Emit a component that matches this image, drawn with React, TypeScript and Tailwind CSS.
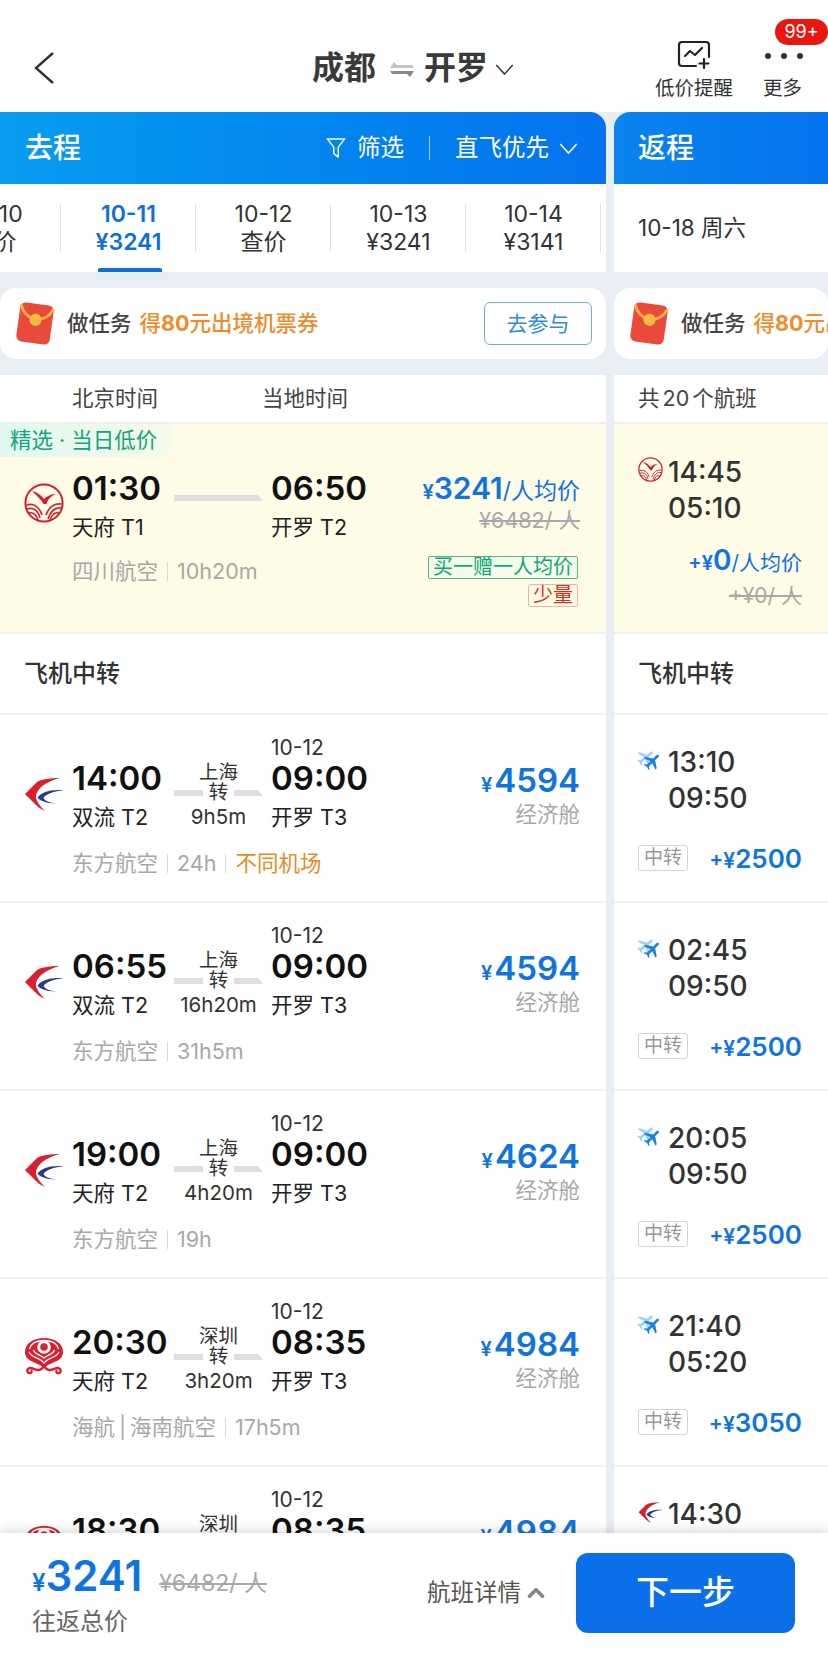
import { ChevronUp } from 'lucide-react';

type Airline = 'sichuan' | 'eastern' | 'hainan' | 'juneyao';

function SichuanLogo({ className }: { className: string }) {
    return (
        <svg viewBox="0 0 40 40" className={className}>
            <circle cx="20" cy="20" r="18.6" fill="none" stroke="#d3202e" strokeWidth="2" />
            <path d="M8 8C13 9 17 12 20 16C23 13 27 11 32 11C27 13 24 16 22.5 21L19.5 21C17 16 12 12 8 8Z" fill="#d3202e" />
            <g fill="none" stroke="#d3202e" strokeWidth="1.6">
                <path d="M2.5 22C9 20 15 23 18 32" />
                <path d="M3 26C9 24 14 27 16 35" />
                <path d="M5 30C9 29 12 31 14 37" />
                <path d="M37.5 21C30 20 25 24 22 32" />
                <path d="M37 25C31 24 27 27 24 36" />
                <path d="M35 30C31 29 28 31 26 37" />
            </g>
        </svg>
    );
}

function EasternLogo({ className }: { className: string }) {
    return (
        <svg viewBox="0 0 40 40" className={className}>
            <path d="M36 5C26 5 18 6 13 9L1 21L10 30C13 33 16 36 21 38C16 33 12 28 12 24C12 15 24 8 36 5Z" fill="#d8202f" />
            <path d="M39.5 17.5C28 16 17 19 13.5 25C18 29 25 31 32 30C26 30 21 28 19.5 25C22 21 30 18 39.5 17.5Z" fill="#2b3a8c" />
        </svg>
    );
}

function HainanLogo({ className }: { className: string }) {
    return (
        <svg viewBox="0 0 40 40" className={className}>
            <path d="M20 31C12 24 1 25 1 15C1 6 10 1 20 1C30 1 39 6 39 15C39 25 28 24 20 31Z" fill="#dc1e2d" />
            <circle cx="20" cy="10" r="6.8" fill="#fff" />
            <circle cx="20" cy="10" r="3.8" fill="#dc1e2d" />
            <g fill="none" stroke="#fff" strokeWidth="1.3">
                <path d="M5 15C8 21 15 20 20 26C25 20 32 21 35 15" />
                <path d="M9.5 13C11 18 16 17 20 21C24 17 29 18 30.5 13" />
                <path d="M5.5 12C7 6 13 3.5 20 3.5C27 3.5 33 6 34.5 12" />
            </g>
            <g fill="none" stroke="#dc1e2d" strokeWidth="2.4" strokeLinecap="round">
                <path d="M20 29C16 36 11 32 7 31C3 31 2 35 5 36C7 36.5 8 35 7.5 34" />
                <path d="M20 29C24 36 29 32 33 31C37 31 38 35 35 36C33 36.5 32 35 32.5 34" />
            </g>
        </svg>
    );
}

function JuneyaoLogo({ className }: { className: string }) {
    const plane = 'M22 12C22 11 21 10.5 20 10.5H15L10 3H8L10.5 10.5H5.5L3.5 8H2L3.5 12L2 16H3.5L5.5 13.5H10.5L8 21H10L15 13.5H20C21 13.5 22 13 22 12Z';
    return (
        <svg viewBox="0 0 28 28" className={className}>
            <g transform="rotate(-38 10 12) translate(-3 -1)" fill="#9fd4f7">
                <path d={plane} />
            </g>
            <g transform="rotate(-45 16 16) translate(4 4)" fill="#1a82e2">
                <path d={plane} />
            </g>
        </svg>
    );
}

function AirlineLogo({ airline, className }: { airline: Airline; className: string }) {
    if (airline === 'sichuan') return <SichuanLogo className={className} />;
    if (airline === 'eastern') return <EasternLogo className={className} />;
    if (airline === 'hainan') return <HainanLogo className={className} />;
    return <JuneyaoLogo className={className} />;
}

function RedPacket() {
    return (
        <svg viewBox="0 0 44 48" className="w-[42px] h-[45px] shrink-0">
            <g transform="rotate(8 22 24)">
                <rect x="4" y="3" width="36" height="42" rx="6" fill="#ea4a3c" />
                <path d="M4.5 6C8 15 14 19 22 19.5C30 19 36 15 39.5 6" fill="none" stroke="#f7b24c" strokeWidth="3" />
                <circle cx="22" cy="20" r="6.5" fill="#f4bb3e" />
            </g>
        </svg>
    );
}

function Caret({ className, color, width = 1.6 }: { className: string; color: string; width?: number }) {
    return (
        <svg viewBox="0 0 20 12" className={className} fill="none" stroke={color} strokeWidth={width}>
            <path d="M1 1L10 11L19 1" />
        </svg>
    );
}

function Divider({ className }: { className: string }) {
    return <span className={`inline-block w-px bg-[#d9d9d9] ${className}`} />;
}

function BarLine() {
    return (
        <svg viewBox="0 0 89 9" className="w-[89px] h-[9px] block">
            <path d="M0 3H84L89 9H0Z" fill="#dfdfe2" />
        </svg>
    );
}

function BarLeft() {
    return <span className="block w-[29px] h-[6px] bg-[#dfdfe2]" />;
}

function BarRight() {
    return (
        <svg viewBox="0 0 29 9" className="w-[29px] h-[9px] block -mt-[3px]">
            <path d="M0 3H24L29 9H0Z" fill="#dfdfe2" />
        </svg>
    );
}

type Flight = {
    airline: Airline;
    dep: string;
    depPort: string;
    arr: string;
    arrPort: string;
    via: string;
    viaTime: string;
    meta: string[];
    warn?: string;
    price: string;
};

const flights: Flight[] = [
    { airline: 'eastern', dep: '14:00', depPort: '双流 T2', arr: '09:00', arrPort: '开罗 T3', via: '上海', viaTime: '9h5m', meta: ['东方航空', '24h'], warn: '不同机场', price: '4594' },
    { airline: 'eastern', dep: '06:55', depPort: '双流 T2', arr: '09:00', arrPort: '开罗 T3', via: '上海', viaTime: '16h20m', meta: ['东方航空', '31h5m'], price: '4594' },
    { airline: 'eastern', dep: '19:00', depPort: '天府 T2', arr: '09:00', arrPort: '开罗 T3', via: '上海', viaTime: '4h20m', meta: ['东方航空', '19h'], price: '4624' },
    { airline: 'hainan', dep: '20:30', depPort: '天府 T2', arr: '08:35', arrPort: '开罗 T3', via: '深圳', viaTime: '3h20m', meta: ['海航\u2009|\u2009海南航空', '17h5m'], price: '4984' },
    { airline: 'hainan', dep: '18:30', depPort: '天府 T2', arr: '08:35', arrPort: '开罗 T3', via: '深圳', viaTime: '3h20m', meta: ['海航\u2009|\u2009海南航空', '17h5m'], price: '4984' },
];

const returns: { airline: Airline; dep: string; arr: string; price: string }[] = [
    { airline: 'juneyao', dep: '13:10', arr: '09:50', price: '2500' },
    { airline: 'juneyao', dep: '02:45', arr: '09:50', price: '2500' },
    { airline: 'juneyao', dep: '20:05', arr: '09:50', price: '2500' },
    { airline: 'juneyao', dep: '21:40', arr: '05:20', price: '3050' },
    { airline: 'eastern', dep: '14:30', arr: '05:20', price: '3050' },
];

const dates = [
    { date: '10-10', price: '查价' },
    { date: '10-11', price: '¥3241', active: true },
    { date: '10-12', price: '查价' },
    { date: '10-13', price: '¥3241' },
    { date: '10-14', price: '¥3141' },
];

function Banner() {
    return (
        <div className="h-[71px] shrink-0 mt-[16px] mb-[16px] bg-white rounded-[16px] flex items-center pl-[14px] pr-[14px] whitespace-nowrap overflow-hidden">
            <RedPacket />
            <span className="ml-[11px] text-[21.5px] font-medium text-[#444]">做任务</span>
            <span className="ml-[8px] text-[21.5px] font-medium text-[#f08c2e]">
                得<span className="font-bold">80</span>元出境机票券
            </span>
            <span className="ml-auto shrink-0 w-[108px] h-[43px] flex items-center justify-center border border-[#6fb0dc] rounded-[6px] text-[21px] text-[#2c8fd6]">
                去参与
            </span>
        </div>
    );
}

function FlightRow({ flight }: { flight: Flight }) {
    return (
        <div className="h-[188px] shrink-0 bg-white border-b-2 border-[#f0f1f3] pt-[21px]">
            <div className="flex h-[95px]">
                <div className="w-[72px] pl-[24px] pt-[37px] shrink-0">
                    <AirlineLogo airline={flight.airline} className="w-[40px] h-[40px]" />
                </div>
                <div className="w-[102px] shrink-0 pt-[24px]">
                    <div className="h-[36px] leading-[36px] text-[33px] font-semibold text-[#111]">{flight.dep}</div>
                    <div className="h-[35px] leading-[42px] text-[21.5px] text-[#222]">{flight.depPort}</div>
                </div>
                <div className="w-[97px] shrink-0 pr-[8px] pt-[25px] text-[#333] text-center">
                    <div className="h-[22px] leading-[22px] text-[19.5px]">{flight.via}</div>
                    <div className="h-[20px] flex items-center justify-between">
                        <BarLeft />
                        <span className="text-[19.5px] leading-[20px] -mt-[2px]">转</span>
                        <BarRight />
                    </div>
                    <div className="h-[24px] mt-[2px] leading-[24px] text-[20.5px] whitespace-nowrap">{flight.viaTime}</div>
                </div>
                <div className="w-[120px] shrink-0">
                    <div className="h-[24px] leading-[24px] text-[21px] text-[#333]">10-12</div>
                    <div className="h-[36px] leading-[36px] text-[33px] font-semibold text-[#111]">{flight.arr}</div>
                    <div className="h-[35px] leading-[42px] text-[21.5px] text-[#222]">{flight.arrPort}</div>
                </div>
                <div className="flex-1 pr-[26px] pt-[23px] text-right">
                    <div className="h-[42px] leading-[42px] text-[#1074e0] font-semibold whitespace-nowrap">
                        <span className="text-[20px] mr-[2px]">¥</span>
                        <span className="text-[33px]">{flight.price}</span>
                    </div>
                    <div className="h-[28px] leading-[28px] -mt-[1px] text-[21.5px] text-[#a8a8a8]">经济舱</div>
                </div>
            </div>
            <div className="mt-[18px] pl-[72px] h-[28px] flex items-center gap-[9px] text-[21.5px] text-[#a8a8a8] whitespace-nowrap">
                {flight.meta.map((item, index) => (
                    <span key={item} className="flex items-center gap-[9px]">
                        {index > 0 && <Divider className="h-[19px]" />}
                        {item}
                    </span>
                ))}
                {flight.warn && (
                    <>
                        <Divider className="h-[19px]" />
                        <span className="text-[#ea8a1f]">{flight.warn}</span>
                    </>
                )}
            </div>
        </div>
    );
}

function ReturnRow({ item }: { item: (typeof returns)[number] }) {
    return (
        <div className="h-[188px] shrink-0 bg-white border-b-2 border-[#f0f1f3] pt-[29px] pl-[24px] pr-[26px]">
            <div className="h-[36px] flex items-center text-[28px] font-medium text-[#333] leading-[36px]">
                <span className="w-[30px] shrink-0 -mt-[6px]">
                    <AirlineLogo airline={item.airline} className="w-[25px] h-[25px]" />
                </span>
                {item.dep}
            </div>
            <div className="h-[36px] pl-[30px] text-[28px] font-medium text-[#333] leading-[36px]">{item.arr}</div>
            <div className="mt-[28px] h-[28px] flex items-center justify-between">
                <span className="w-[50px] h-[26px] flex items-center justify-center border border-[#d4d4d4] rounded-[3px] text-[19px] text-[#999]">
                    中转
                </span>
                <span className="text-[#1074e0] font-semibold whitespace-nowrap">
                    <span className="text-[21px]">+¥</span>
                    <span className="text-[26px]">{item.price}</span>
                </span>
            </div>
        </div>
    );
}

export default function App() {
    return (
        <div className="w-[828px] h-[1663px] flex flex-col overflow-hidden bg-white font-['Inter','Noto_Sans_CJK_SC',sans-serif]">
            {/* Top bar */}
            <header className="h-[112px] shrink-0 flex relative">
                <div className="w-[300px] pl-[33px] pt-[52px]">
                    <svg viewBox="0 0 21 32" className="w-[21px] h-[32px]" fill="none" stroke="#333" strokeWidth="2.4">
                        <path d="M20 1L3 16L20 31" />
                    </svg>
                </div>
                <div className="w-[340px] shrink-0 pl-[12px] pt-[46px] flex items-start">
                    <span className="text-[32px] leading-[44px] font-bold text-[#3a3a3a]">成都</span>
                    <svg viewBox="0 0 24 15" className="w-[24px] h-[15px] ml-[14px] mt-[16px]">
                        <path d="M0 6H24L22 3H7L4 0Z" fill="#c4c4c4" />
                        <path d="M24 9H0L2 12H17L20 15Z" fill="#8a8a8a" />
                    </svg>
                    <span className="ml-[10px] text-[32px] leading-[44px] font-bold text-[#3a3a3a]">开罗</span>
                    <Caret className="w-[19px] h-[11px] mt-[18px] ml-[7px]" color="#333" />
                </div>
                <div className="flex-1 flex text-[19.5px] text-[#333]">
                    <div className="w-[108px] pt-[40px] flex flex-col items-center shrink-0">
                        <svg viewBox="0 0 34 30" className="w-[34px] h-[30px]" fill="none" stroke="#222" strokeWidth="2.2" strokeLinecap="round" strokeLinejoin="round">
                            <path d="M19 26H5C3 26 2 25 2 23V5C2 3 3 2 5 2H29C31 2 32 3 32 5V17" />
                            <path d="M8 16L13 11L18 15L25 8" />
                            <path d="M27 19V28M22.5 23.5H31.5" />
                        </svg>
                        <span className="mt-[6px] leading-[24px] whitespace-nowrap">低价提醒</span>
                    </div>
                    <div className="flex-1 pt-[40px] pl-[15px] relative">
                        <span className="absolute right-0 top-[19px] w-[53px] h-[26px] rounded-full bg-[#e8170f] text-white text-[18px] leading-[26px] text-center">
                            99+
                        </span>
                        <div className="h-[30px] flex items-start pt-[13px] gap-[10px] pl-[2px]">
                            <span className="w-[6px] h-[6px] rounded-full bg-[#333]" />
                            <span className="w-[6px] h-[6px] rounded-full bg-[#333]" />
                            <span className="w-[6px] h-[6px] rounded-full bg-[#333]" />
                        </div>
                        <span className="block mt-[6px] leading-[24px] whitespace-nowrap">更多</span>
                    </div>
                </div>
            </header>

            <main className="flex-1 min-h-0 flex gap-[8px] bg-[#e9eef4] overflow-hidden">
                {/* Outbound */}
                <section className="w-[606px] shrink-0 flex flex-col">
                    <div className="h-[72px] shrink-0 rounded-tr-[16px] bg-gradient-to-r from-[#0a9cf0] to-[#0672ee] flex items-center pl-[25px] pr-[28px] text-white">
                        <span className="text-[28px] font-medium">去程</span>
                        <svg viewBox="0 0 22 24" className="w-[20px] h-[22px] ml-auto" fill="none" stroke="#fff" strokeWidth="1.6" strokeLinejoin="round">
                            <path d="M1.5 2H20.5L13.5 11V22L8.5 18V11Z" />
                        </svg>
                        <span className="ml-[11px] text-[23.5px]">筛选</span>
                        <span className="w-px h-[24px] bg-white/60 ml-[25px] mr-[25px]" />
                        <span className="text-[23.5px]">直飞优先</span>
                        <Caret className="w-[19px] h-[11px] ml-[10px]" color="#fff" />
                    </div>

                    {/* Date tabs */}
                    <div className="h-[88px] shrink-0 bg-white flex overflow-hidden">
                        <div className="flex shrink-0 -ml-[74px]">
                            {dates.map((d) => (
                                <div key={d.date} className="relative w-[135px] shrink-0 pt-[16px] text-center whitespace-nowrap">
                                    <div className={`text-[23px] leading-[28px] ${d.active ? 'text-[#0d6fde] font-semibold' : 'text-[#333]'}`}>{d.date}</div>
                                    <div className={`text-[23px] leading-[28px] ${d.active ? 'text-[#0d6fde] font-semibold' : 'text-[#333]'}`}>{d.price}</div>
                                    <span className="absolute right-0 top-[20px] w-px h-[48px] bg-[#e2e2e2]" />
                                    {d.active && <span className="absolute left-[37px] bottom-0 w-[64px] h-[4px] bg-[#0d6fde] rounded-t-[2px]" />}
                                </div>
                            ))}
                        </div>
                    </div>

                    <Banner />

                    <div className="h-[49px] shrink-0 bg-white border-b-2 border-[#f0efe8] flex items-center text-[21.5px] text-[#444]">
                        <span className="ml-[72px] w-[190px]">北京时间</span>
                        <span>当地时间</span>
                    </div>

                    {/* Selected flight */}
                    <div className="relative h-[208px] shrink-0 bg-[#fefbe7] pt-[22px]">
                        <span className="absolute left-0 top-0 w-[172px] h-[33px] pl-[10px] rounded-br-[14px] bg-gradient-to-r from-[#e3f7ee] to-[#f3faea] text-[21.5px] leading-[32px] text-[#12a57c] whitespace-nowrap">
                            精选 · 当日低价
                        </span>
                        <div className="flex h-[95px]">
                            <div className="w-[72px] pl-[24px] pt-[37px] shrink-0">
                                <SichuanLogo className="w-[40px] h-[40px]" />
                            </div>
                            <div className="w-[102px] shrink-0 pt-[24px]">
                                <div className="h-[36px] leading-[36px] text-[33px] font-semibold text-[#111]">01:30</div>
                                <div className="h-[35px] leading-[42px] text-[21.5px] text-[#222]">天府 T1</div>
                            </div>
                            <div className="w-[97px] shrink-0 pt-[46px]">
                                <BarLine />
                            </div>
                            <div className="w-[120px] shrink-0 pt-[24px]">
                                <div className="h-[36px] leading-[36px] text-[33px] font-semibold text-[#111]">06:50</div>
                                <div className="h-[35px] leading-[42px] text-[21.5px] text-[#222]">开罗 T2</div>
                            </div>
                            <div className="flex-1 pr-[26px] pt-[22px] text-right whitespace-nowrap">
                                <div className="h-[40px] leading-[40px] text-[#1074e0]">
                                    <span className="text-[20px] font-semibold">¥</span>
                                    <span className="text-[30px] font-semibold">3241</span>
                                    <span className="text-[23px]">/人均价</span>
                                </div>
                                <div className="h-[30px] leading-[30px] -mt-[3px] text-[21.5px] text-[#a8a8a8] line-through">¥6482/ 人</div>
                            </div>
                        </div>
                        <div className="flex -mt-[1px]">
                            <div className="mt-[17px] pl-[72px] h-[28px] flex items-center gap-[9px] text-[21.5px] text-[#a8a8a8] whitespace-nowrap">
                                四川航空
                                <Divider className="h-[19px]" />
                                10h20m
                            </div>
                            <div className="ml-auto pr-[28px] pt-[16px] flex flex-col items-end gap-[5px]">
                                <span className="h-[23px] px-[4px] border border-[#4dbc8d] rounded-[2px] text-[20px] leading-[21px] text-[#12a57c] whitespace-nowrap bg-[#f4fbe9]">
                                    买一赠一人均价
                                </span>
                                <span className="h-[23px] px-[4px] border border-[#f0b4ae] rounded-[2px] text-[20px] leading-[21px] text-[#d8301f]">
                                    少量
                                </span>
                            </div>
                        </div>
                    </div>

                    <div className="h-[83px] shrink-0 bg-white border-t-2 border-b-2 border-[#f0f1f3] flex items-center pl-[24px] text-[24px] font-medium text-[#333]">
                        飞机中转
                    </div>

                    {flights.map((flight) => (
                        <FlightRow key={flight.dep} flight={flight} />
                    ))}
                </section>

                {/* Return */}
                <section className="flex-1 min-w-0 flex flex-col">
                    <div className="h-[72px] shrink-0 rounded-tl-[16px] bg-gradient-to-r from-[#0a84ee] to-[#0672ee] flex items-center pl-[24px] text-white">
                        <span className="text-[28px] font-medium">返程</span>
                    </div>
                    <div className="h-[88px] shrink-0 bg-white flex items-center pl-[24px] text-[22.5px] text-[#333]">10-18 周六</div>
                    <Banner />
                    <div className="h-[49px] shrink-0 bg-white border-b-2 border-[#f0efe8] flex items-center pl-[24px] text-[21.5px] text-[#444] [word-spacing:-3px]">
                        共 20 个航班
                    </div>
                    <div className="h-[208px] shrink-0 bg-[#fefbe7] pt-[30px] pl-[24px] pr-[26px]">
                        <div className="h-[36px] flex items-center text-[28px] font-medium text-[#333] leading-[36px]">
                            <span className="w-[30px] shrink-0 -mt-[6px]">
                                <SichuanLogo className="w-[25px] h-[25px]" />
                            </span>
                            14:45
                        </div>
                        <div className="h-[36px] pl-[30px] text-[28px] font-medium text-[#333] leading-[36px]">05:10</div>
                        <div className="mt-[16px] text-right whitespace-nowrap leading-[36px] text-[#1074e0]">
                            <span className="text-[20px] font-semibold">+¥</span>
                            <span className="text-[28px] font-semibold">0</span>
                            <span className="text-[21px]">/人均价</span>
                        </div>
                        <div className="text-right text-[21px] leading-[34px] -mt-[3px] text-[#a8a8a8] line-through">+¥0/ 人</div>
                    </div>
                    <div className="h-[83px] shrink-0 bg-white border-t-2 border-b-2 border-[#f0f1f3] flex items-center pl-[24px] text-[24px] font-medium text-[#333]">
                        飞机中转
                    </div>
                    {returns.map((item) => (
                        <ReturnRow key={item.dep} item={item} />
                    ))}
                </section>
            </main>

            {/* Bottom bar */}
            <footer className="relative z-10 h-[130px] shrink-0 bg-white shadow-[0_-3px_10px_rgba(0,0,0,0.14)] flex pl-[32px] pr-[33px] pt-[20px]">
                <div className="w-[395px] shrink-0">
                    <div className="flex items-baseline h-[46px] whitespace-nowrap">
                        <span className="text-[24px] font-semibold text-[#1074e0]">¥</span>
                        <span className="text-[42px] leading-[46px] font-semibold text-[#1074e0]">3241</span>
                        <span className="ml-[17px] text-[23px] text-[#a8a8a8] line-through">¥6482/ 人</span>
                    </div>
                    <div className="mt-[7px] text-[24px] leading-[32px] text-[#666]">往返总价</div>
                </div>
                <div className="w-[149px] shrink-0 h-[80px] flex items-center text-[23.5px] text-[#555] whitespace-nowrap">
                    航班详情
                    <ChevronUp className="w-[26px] h-[26px] ml-[2px] text-[#888]" strokeWidth={3.4} />
                </div>
                <button className="w-[219px] h-[80px] shrink-0 rounded-[12px] bg-[#0a6fe8] text-white text-[33px] font-medium">下一步</button>
            </footer>
        </div>
    );
}
